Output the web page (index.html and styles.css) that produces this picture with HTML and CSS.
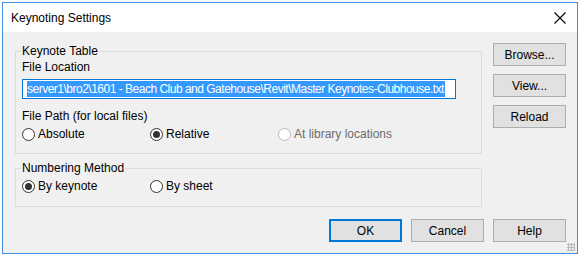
FILE: index.html
```html
<!DOCTYPE html>
<html lang="en">
<head>
  <meta charset="UTF-8">
  <title>Keynoting Settings</title>
  <link rel="stylesheet" href="styles.css">
</head>
<body>
  <div class="window">
    <div class="titlebar">
      <span class="title">Keynoting Settings</span>
      <svg class="close" width="12" height="12" viewBox="0 0 12 12">
        <path d="M0.5 0.5 L11.5 11.5 M11.5 0.5 L0.5 11.5" stroke="#000" stroke-width="1.1" fill="none"/>
      </svg>
    </div>

    <div class="content">
      <div class="main">
        <!-- Keynote table -->
        <fieldset class="group">
          <legend>Keynote Table</legend>
          <div class="label">File Location</div>
          <div class="textbox"><span class="selected">server1\bro2\1601 - Beach Club and Gatehouse\Revit\Master Keynotes-Clubhouse.txt</span></div>
          <div class="label label-gap">File Path (for local files)</div>
          <div class="radios">
            <label class="radio"><span class="dot"></span>Absolute</label>
            <label class="radio checked"><span class="dot"></span>Relative</label>
            <label class="radio disabled"><span class="dot"></span>At library locations</label>
          </div>
        </fieldset>

        <!-- Numbering -->
        <fieldset class="group group-numbering">
          <legend>Numbering Method</legend>
          <div class="radios">
            <label class="radio checked"><span class="dot"></span>By keynote</label>
            <label class="radio"><span class="dot"></span>By sheet</label>
          </div>
        </fieldset>
      </div>

      <div class="side">
        <button class="btn">Browse...</button>
        <button class="btn">View...</button>
        <button class="btn">Reload</button>
      </div>

      <div class="footer">
        <button class="btn default">OK</button>
        <button class="btn">Cancel</button>
        <button class="btn">Help</button>
      </div>
    </div>
    <span class="grip"></span>
  </div>
</body>
</html>
```

FILE: styles.css
```css
body {
  margin: 0;
  background-color: #fff;
  font-family: "Liberation Sans", Arial, sans-serif;
  font-size: 12px;
  color: #000;
}
.window {
  position: relative;
  width: 574px;
  height: 250px;
  margin: 2px 0 0 2px;
  border: 1px solid #3c8fd8;
  background-color: #f0f0f0;
  display: flex;
  flex-direction: column;
}
.titlebar {
  height: 29px;
  background-color: #fff;
  display: flex;
  align-items: center;
  justify-content: space-between;
  padding: 0 11px 0 8px;
}
.title {
  font-size: 12px;
}
.close {
  display: block;
}
.content {
  flex: 1;
  display: grid;
  grid-template-columns: 467px 73px;
  column-gap: 11px;
  padding: 11px 11px 11px 12px;
}
.main {
  display: flex;
  flex-direction: column;
}
.group {
  margin: 0;
  padding: 0 6px 11px 6px;
  border: 1px solid #dcdcdc;
  min-width: 0;
}
.group legend {
  padding: 0 1px;
  margin-left: -1px;
  line-height: 16px;
}
.group-numbering {
  margin-top: 6px;
  padding-bottom: 12px;
}
.label {
  line-height: 16px;
}
.label-gap {
  margin-top: 9px;
}
.textbox {
  width: 428px;
  height: 18px;
  margin-top: 4px;
  border: 1px solid #0078d7;
  background-color: #fff;
  overflow: hidden;
  white-space: nowrap;
  display: flex;
  align-items: center;
  padding-left: 4px;
}
.selected {
  background-color: #3399ff;
  color: #fff;
  line-height: 16px;
  letter-spacing: -0.5px;
  padding-right: 1px;
}
.radios {
  display: flex;
  margin-top: 2px;
}
.radio {
  width: 128px;
  display: flex;
  align-items: center;
  line-height: 16px;
}
.radio:last-child {
  width: auto;
}
.dot {
  width: 11px;
  height: 11px;
  border: 1px solid #333;
  border-radius: 50%;
  background-color: #fff;
  margin-right: 3px;
  display: flex;
  align-items: center;
  justify-content: center;
}
.radio.checked .dot::after {
  content: "";
  width: 7px;
  height: 7px;
  border-radius: 50%;
  background-color: #333;
}
.radio.disabled {
  color: #6d6d6d;
}
.radio.disabled .dot {
  border-color: #bcbcbc;
}
.side {
  display: flex;
  flex-direction: column;
  gap: 8px;
}
.btn {
  width: 73px;
  height: 23px;
  padding: 0;
  font-family: inherit;
  font-size: 12px;
  color: #000;
  background-color: #e1e1e1;
  border: 1px solid #adadad;
}
.btn.default {
  border: 2px solid #0078d7;
}
.footer {
  grid-column: 1 / span 2;
  align-self: end;
  display: flex;
  justify-content: flex-end;
  gap: 9px;
}
.grip {
  position: absolute;
  right: 2px;
  bottom: 2px;
  width: 8px;
  height: 8px;
  background-image: radial-gradient(circle, #b8b8b8 1px, transparent 1.2px);
  background-size: 3px 3px;
}
```
